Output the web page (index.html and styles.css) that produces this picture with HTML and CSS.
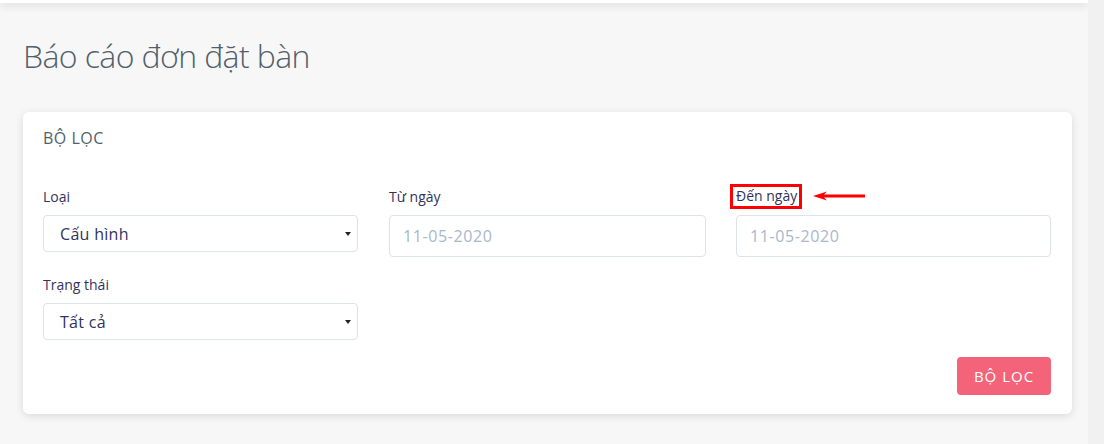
FILE: index.html
```html
<!DOCTYPE html>
<html lang="vi">
<head>
<meta charset="utf-8">
<link rel="stylesheet" href="styles.css">
</head>
<body>
<div class="layout">
  <main class="main">
    <div class="topbar"></div>
    <h1 class="title">Báo cáo đơn đặt bàn</h1>
    <section class="card">
      <h2 class="card-title">BỘ LỌC</h2>
      <div class="grid">
        <div class="field">
          <label class="label">Loại</label>
          <div class="select"><span>Cấu hình</span><svg class="caret" width="6" height="4" viewBox="0 0 6 4"><path d="M0 0H6L3 4Z" fill="#222"/></svg></div>
        </div>
        <div class="field">
          <label class="label">Từ ngày</label>
          <div class="input">11-05-2020</div>
        </div>
        <div class="field">
          <label class="label"><span class="marked">Đến ngày</span><span class="arrow"><svg width="52" height="10" viewBox="0 0 52 10"><path d="M0 5 L14 0.5 L11 3.5 H52 V6.5 H11 L14 9.5 Z" fill="#f00"/></svg></span></label>
          <div class="input">11-05-2020</div>
        </div>
        <div class="field">
          <label class="label">Trạng thái</label>
          <div class="select"><span>Tất cả</span><svg class="caret" width="6" height="4" viewBox="0 0 6 4"><path d="M0 0H6L3 4Z" fill="#222"/></svg></div>
        </div>
      </div>
      <div class="actions">
        <button class="btn">BỘ LỌC</button>
      </div>
    </section>
  </main>
  <div class="scroll-strip"></div>
</div>
</body>
</html>
```
FILE: styles.css
```css
* { box-sizing: border-box; }
html, body { margin: 0; padding: 0; }
body {
  font-family: "Open Sans", "Noto Sans", sans-serif;
  background: #f7f7f7;
  width: 1104px;
  height: 444px;
  overflow: hidden;
}
.layout { display: flex; height: 444px; }
.main { width: 1088px; background: #f7f7f7; }
.scroll-strip { width: 16px; background: #f1f1f1; }
.topbar {
  height: 3px;
  background: #fff;
  box-shadow: 0 2px 8px rgba(0,0,0,0.2);
}
.title {
  margin: 33px 0 0 23px;
  font-family: "Open Sans", sans-serif;
  font-weight: 300;
  font-size: 32px;
  line-height: 40px;
  color: #525f6b;
  letter-spacing: -0.6px;
}
.card {
  margin: 36px 16px 0 23px;
  background: #fff;
  border-radius: 6px;
  box-shadow: 0 2px 8px rgba(0,0,0,0.12);
  padding: 16px 21px 20px 20px;
  height: 302px;
}
.card-title {
  margin: 0;
  font-weight: 400;
  font-size: 16px;
  line-height: 20px;
  color: #525f6b;
  letter-spacing: 0.5px;
}
.grid {
  margin-top: 35px;
  display: grid;
  grid-template-columns: 316px 317px 315px;
  column-gap: 30px;
  row-gap: 14px;
  align-items: start;
}
.label {
  display: flex;
  align-items: center;
  height: 26px;
  font-size: 14px;
  color: #32325d;
  margin-bottom: 6px;
}
.marked {
  border: 3px solid #f00;
  padding: 0 2px 1px 3px;
  margin-left: -6px;
  line-height: 18px;
  color: #32325d;
}
.arrow { display: inline-flex; margin-left: 11px; }
.select {
  height: 37px;
  width: 315px;
  border: 1px solid #dee2ea;
  border-radius: 4px;
  display: flex;
  align-items: center;
  justify-content: space-between;
  padding: 0 6px 0 16px;
  font-size: 16px;
  letter-spacing: 0.3px;
  color: #32325d;
}
.caret { display: block; }
.input {
  height: 42px;
  border: 1px solid #dee2ea;
  border-radius: 4px;
  display: flex;
  align-items: center;
  padding: 0 13px;
  font-size: 16px;
  letter-spacing: 0.6px;
  color: #a9b6cc;
}
.actions { display: flex; justify-content: flex-end; margin-top: 17px; }
.btn {
  width: 94px;
  height: 38px;
  border: 0;
  border-radius: 4px;
  background: #f3647a;
  color: #fff;
  font-family: "Open Sans", sans-serif;
  font-size: 15px;
  letter-spacing: 1px;
  font-weight: 400;
}
```
